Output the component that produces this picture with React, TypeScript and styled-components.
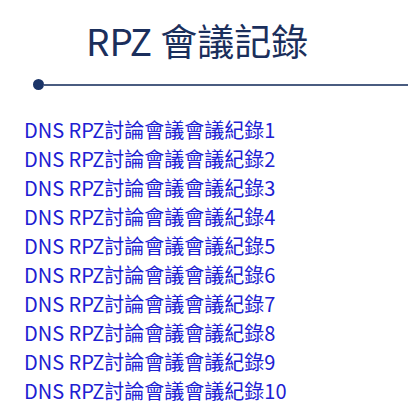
import React from "react";
import styled, { createGlobalStyle } from "styled-components";

const GlobalStyle = createGlobalStyle`
  body {
    margin: 0;
    background: #fff;
    font-family: "Noto Sans CJK TC", "Noto Sans", sans-serif;
  }
`;

const records = Array.from({ length: 10 }, (_, i) => ({
  id: i + 1,
  title: `DNS RPZ討論會議會議紀錄${i + 1}`,
}));

const App: React.FC = () => (
  <Page>
    <GlobalStyle />
    <Title>RPZ 會議記錄</Title>
    <Divider>
      <Dot />
      <Line />
    </Divider>
    <List>
      {records.map((r) => (
        <li key={r.id}>
          <RecordLink href="#">{r.title}</RecordLink>
        </li>
      ))}
    </List>
  </Page>
);

export default App;

const Page = styled.div`
  width: 408px;
  height: 404px;
  overflow: hidden;
`;

const Title = styled.h1`
  margin: 0;
  padding: 14px 0 0 86px;
  font-size: 37px;
  font-weight: 400;
  line-height: 52px;
  color: #1b2f5c;
`;

const Divider = styled.div`
  display: flex;
  align-items: center;
  margin: 13px 0 0 33px;
`;

const Dot = styled.span`
  width: 11px;
  height: 11px;
  border-radius: 50%;
  background: #1b3468;
  flex-shrink: 0;
`;

const Line = styled.span`
  flex: 1;
  height: 2px;
  background: #4a5c80;
`;

const List = styled.ul`
  list-style: none;
  margin: 0;
  padding: 25px 0 0 24px;
  li {
    height: 29px;
    line-height: 29px;
  }
`;

const RecordLink = styled.a`
  font-size: 20px;
  color: #2020d2;
  text-decoration: none;
`;
